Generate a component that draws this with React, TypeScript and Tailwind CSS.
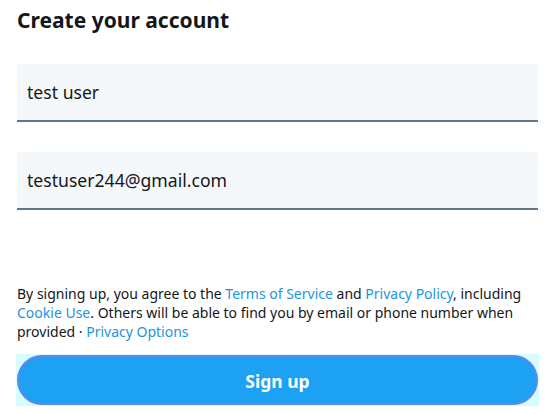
import React from "react";

const FieldBox = ({ value }: { value: string }) => (
  <div className="h-[58px] bg-[#f5f8fa] border-b-2 border-[#657786] flex items-center px-[10px]">
    <span className="text-[17.6px] text-[#14171a] mt-px">{value}</span>
  </div>
);

const Link = ({ children }: { children: React.ReactNode }) => (
  <span className="text-[#1b95e0]">{children}</span>
);

export default function App() {
  return (
    <div className="w-[554px] h-[414px] bg-white font-['Noto_Sans',sans-serif] px-[17px] flex flex-col overflow-hidden">
      <h1 className="text-[21px] font-bold text-[#14171a] leading-[26px] mt-[7px]">
        Create your account
      </h1>
      <div className="mt-[31px] w-[521px] flex flex-col gap-[30px]">
        <FieldBox value="test user" />
        <FieldBox value="testuser244@gmail.com" />
      </div>
      <p className="mt-[74px] text-[14px] leading-[19px] text-[#14171a]">
        By signing up, you agree to the <Link>Terms of Service</Link> and{" "}
        <Link>Privacy Policy</Link>, including <Link>Cookie Use</Link>. Others
        will be able to find you by email or phone number when provided ·{" "}
        <Link>Privacy Options</Link>
      </p>
      <div className="mt-[13px] w-[523px] -ml-px p-px bg-[#d6fcff]">
        <button className="w-full h-[50px] rounded-full bg-[#1da1f2] border-2 border-[#5f86e8] text-white text-[17.5px] font-bold">
          <span className="relative top-px">Sign up</span>
        </button>
      </div>
    </div>
  );
}
